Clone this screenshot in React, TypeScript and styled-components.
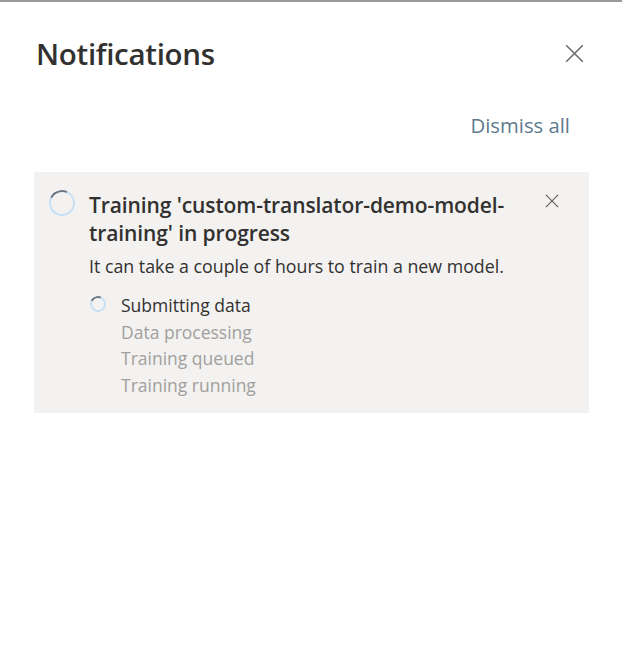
import React from "react";
import styled, { createGlobalStyle } from "styled-components";

const Global = createGlobalStyle`
  html, body { margin: 0; padding: 0; background: #ffffff; }
  body { font-family: "Open Sans", "Noto Sans", Arial, sans-serif; color: #323130; }
`;

const Panel = styled.div`
  width: 622px;
  height: 658px;
  box-sizing: border-box;
  border-top: 2px solid #9a9a9a;
  background: #fff;
  display: flex;
  flex-direction: column;
`;

const Header = styled.div`
  display: flex;
  align-items: center;
  justify-content: space-between;
  padding: 30px 38px 0 36px;
  height: 42px;
`;

const Title = styled.h1`
  margin: 0;
  font-size: 29.5px;
  font-weight: 600;
  color: #323130;
  letter-spacing: -0.3px;
`;

const IconButton = styled.button<{ $size: number }>`
  border: none;
  background: transparent;
  padding: 0;
  width: ${(p) => p.$size}px;
  height: ${(p) => p.$size}px;
  display: flex;
  align-items: center;
  justify-content: center;
  cursor: pointer;
  color: #605e5c;
`;

const DismissRow = styled.div`
  display: flex;
  justify-content: flex-end;
  padding: 38px 52px 0 0;
`;

const DismissLink = styled.button`
  border: none;
  background: transparent;
  padding: 0;
  font-family: inherit;
  font-size: 20.3px;
  line-height: 27px;
  color: #5d7b8e;
  cursor: pointer;
`;

const Card = styled.div`
  margin: 33px 33px 0 34px;
  background: #f3f2f1;
  display: grid;
  grid-template-columns: 55px 1fr 50px;
  padding: 18px 0 15px 0;
`;

const Spinner = styled.div<{ $size: number; $border: number }>`
  width: ${(p) => p.$size}px;
  height: ${(p) => p.$size}px;
  box-sizing: border-box;
  border-radius: 50%;
  border: ${(p) => p.$border}px solid #c7e0f4;
  border-top-color: #6b7a86;
  transform: rotate(-20deg);
`;

const SpinCol = styled.div`
  display: flex;
  justify-content: flex-start;
  padding: 0 0 0 15px;
`;

const Body = styled.div`
  display: flex;
  flex-direction: column;
  padding-top: 1px;
`;

const CardTitle = styled.div`
  font-size: 21px;
  font-weight: 600;
  line-height: 28px;
  color: #323130;
  letter-spacing: -0.1px;
`;

const CardDesc = styled.div`
  font-size: 17.8px;
  line-height: 24px;
  color: #323130;
  margin-top: 7px;
`;

const Steps = styled.div`
  display: grid;
  grid-template-columns: 32px 1fr;
  margin-top: 14px;
`;

const StepIcon = styled.div`
  padding-top: 4px;
  padding-left: 1px;
`;

const StepText = styled.div<{ $active?: boolean }>`
  grid-column: 2;
  font-size: 17.5px;
  line-height: 26.6px;
  color: ${(p) => (p.$active ? "#323130" : "#a19f9d")};
`;

const CloseCol = styled.div`
  display: flex;
  justify-content: flex-start;
  padding: 3px 0 0 5px;
`;

const XIcon = ({ size, stroke }: { size: number; stroke: string }) => (
  <svg width={size} height={size} viewBox="0 0 16 16" fill="none">
    <path d="M1 1 L15 15 M15 1 L1 15" stroke={stroke} strokeWidth="1.3" />
  </svg>
);

const steps = ["Submitting data", "Data processing", "Training queued", "Training running"];

export default function App() {
  return (
    <>
      <Global />
      <Panel>
        <Header>
          <Title>Notifications</Title>
          <IconButton $size={20} aria-label="Close">
            <XIcon size={19} stroke="#6b6a69" />
          </IconButton>
        </Header>
        <DismissRow>
          <DismissLink>Dismiss all</DismissLink>
        </DismissRow>
        <Card>
          <SpinCol>
            <Spinner $size={26} $border={2} />
          </SpinCol>
          <Body>
            <CardTitle>Training 'custom-translator-demo-model-training' in progress</CardTitle>
            <CardDesc>It can take a couple of hours to train a new model.</CardDesc>
            <Steps>
              <StepIcon>
                <Spinner $size={16} $border={2} />
              </StepIcon>
              <StepText $active>Submitting data</StepText>
              {steps.slice(1).map((s) => (
                <StepText key={s}>{s}</StepText>
              ))}
            </Steps>
          </Body>
          <CloseCol>
            <IconButton $size={16} aria-label="Dismiss">
              <XIcon size={14} stroke="#605e5c" />
            </IconButton>
          </CloseCol>
        </Card>
      </Panel>
    </>
  );
}
